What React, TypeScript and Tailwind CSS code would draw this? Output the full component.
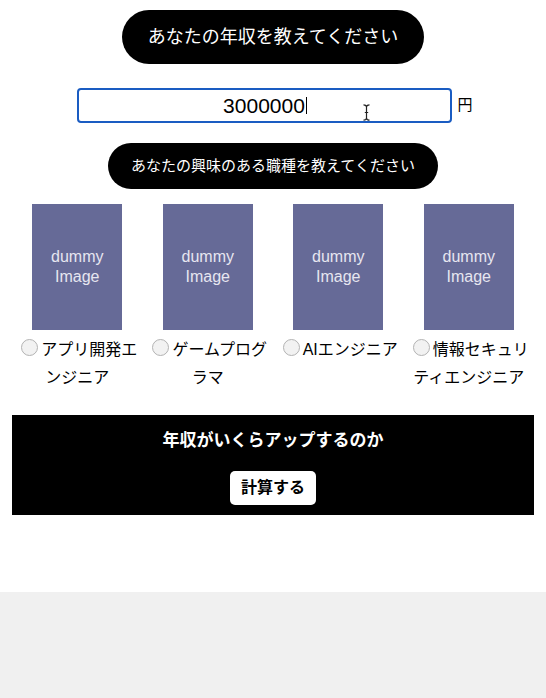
const jobs = [
  "アプリ開発エンジニア",
  "ゲームプログラマ",
  "AIエンジニア",
  "情報セキュリティエンジニア",
];

export default function App() {
  return (
    <div className="min-h-[698px] bg-[#f0f0f0] font-['Liberation_Sans','Noto_Sans_CJK_JP',sans-serif] text-black">
      <main className="h-[592px] bg-white pt-[10px]">
        <div className="mx-auto flex h-[54px] w-fit items-center rounded-full bg-black px-[26px] text-[18px] text-white">
          あなたの年収を教えてください
        </div>

        <div className="mt-[24px] flex items-center justify-center pl-[4px]">
          <div className="relative flex h-[35px] w-[375px] items-center justify-center rounded-[4px] border-2 border-[#1a5cc2] text-[21px]">
            <span>3000000</span>
            <span className="ml-[1px] h-[17px] w-px bg-black" />
            <svg
              className="absolute left-[284px] top-[14px]"
              width="7"
              height="17"
              viewBox="0 0 7 17"
              fill="none"
              stroke="#222"
              strokeWidth="1.2"
            >
              <path d="M0.5 0.8 C2 0.8 3.5 1.5 3.5 3 V14 C3.5 15.5 2 16.2 0.5 16.2 M6.5 0.8 C5 0.8 3.5 1.5 3.5 3 M6.5 16.2 C5 16.2 3.5 15.5 3.5 14 M1.8 8.5 H5.2" />
            </svg>
          </div>
          <span className="ml-[5px] text-[15px]">円</span>
        </div>

        <div className="mx-auto mt-[20px] flex h-[46px] w-fit items-center rounded-full bg-black px-[23px] text-[15px] text-white">
          あなたの興味のある職種を教えてください
        </div>

        <div className="mx-[12px] mt-[15px] grid grid-cols-4">
          {jobs.map((job) => (
            <div key={job} className="flex flex-col items-center">
              <div className="flex h-[126px] w-[90px] flex-col items-center justify-center bg-[#666a97] text-center text-[16px] leading-[20px] text-[#e6e6f0]">
                <span>dummy</span>
                <span>Image</span>
              </div>
              <label className="mt-[6px] text-center text-[16px] leading-[28px]">
                <span className="mr-[3px] ml-[4px] inline-block h-[17px] w-[17px] rounded-full border border-[#b3b3b3] bg-[#f2f2f2] align-[-1px]" />
                {job}
              </label>
            </div>
          ))}
        </div>

        <div className="mx-[12px] mt-[23px] flex h-[100px] flex-col items-center bg-black">
          <p className="mt-[14px] text-[17px] font-bold leading-[24px] text-white">
            年収がいくらアップするのか
          </p>
          <button className="mt-[18px] flex h-[34px] w-[86px] items-center justify-center rounded-[5px] bg-white text-[16px] font-bold text-black">
            計算する
          </button>
        </div>
      </main>
    </div>
  );
}
